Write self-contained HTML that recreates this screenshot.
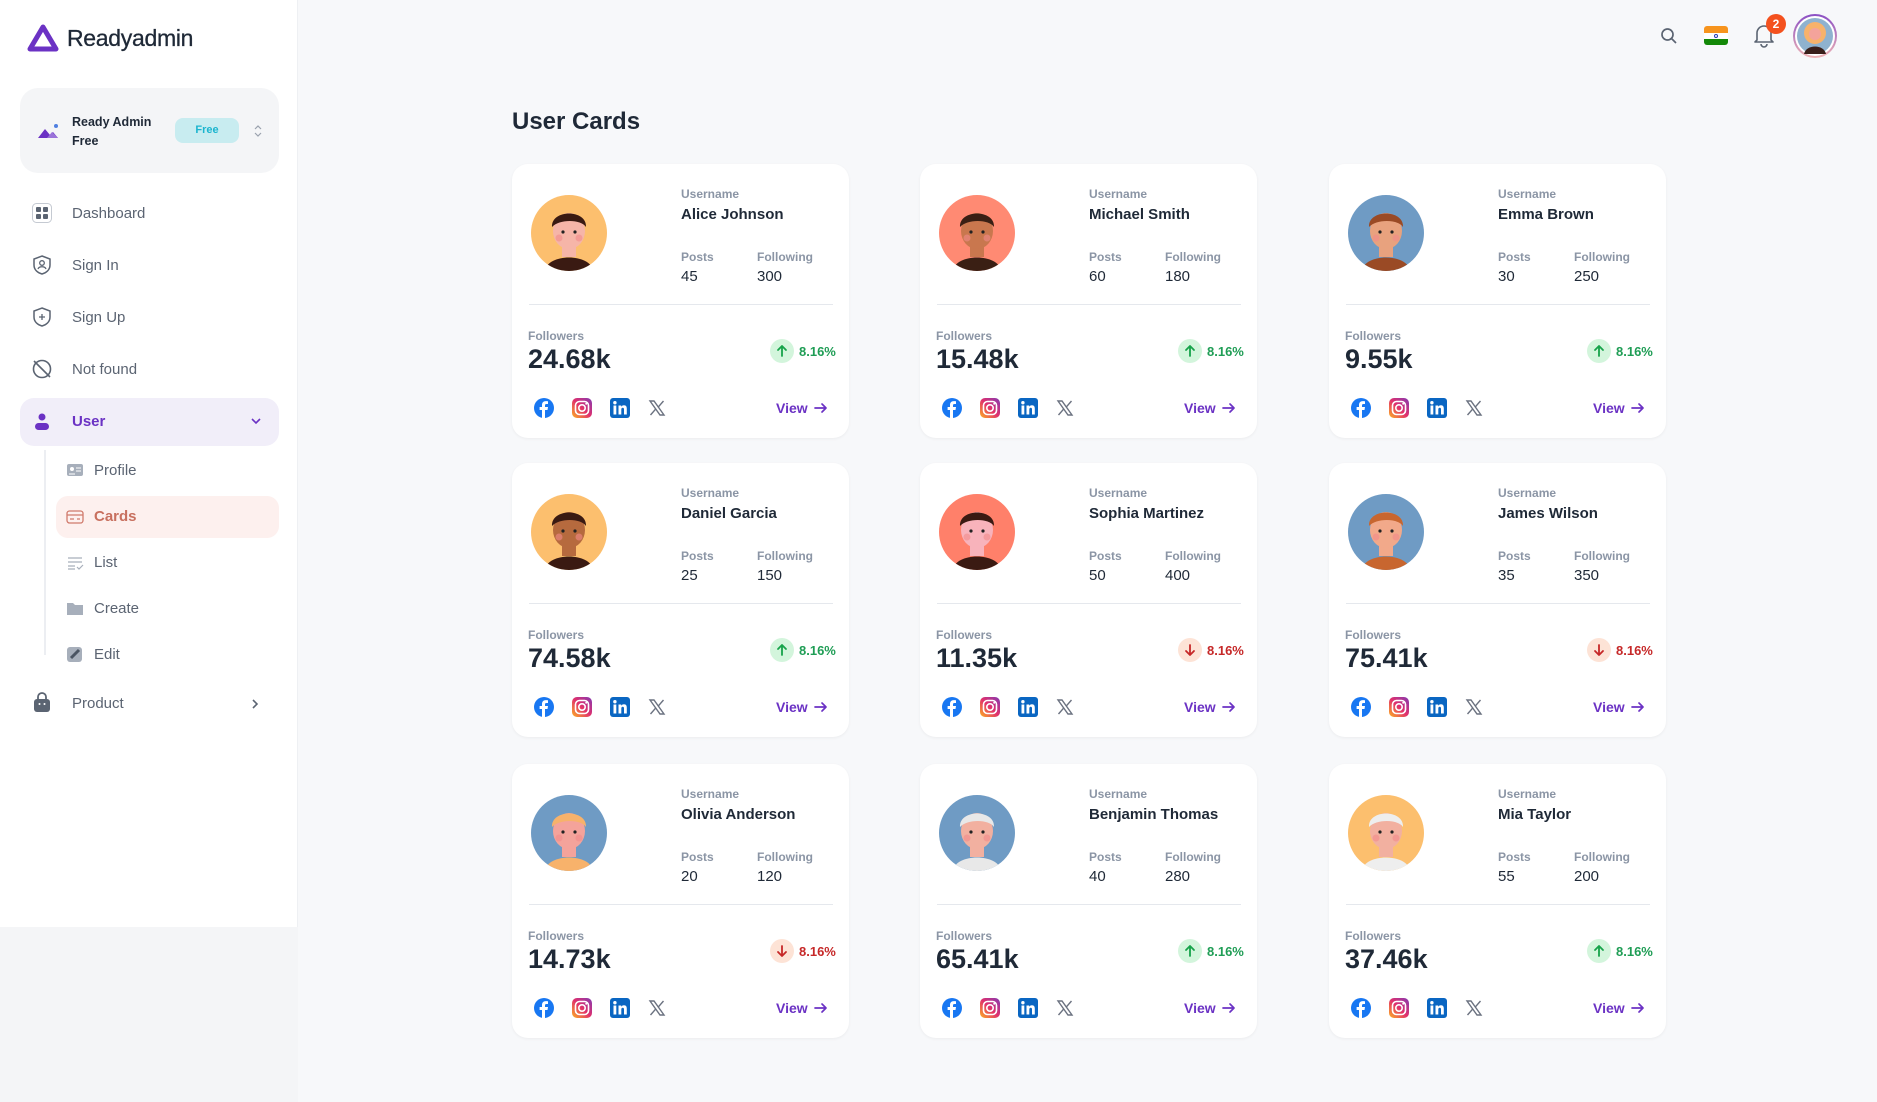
<!DOCTYPE html>
<html><head><meta charset="utf-8"><style>
*{box-sizing:border-box;margin:0;padding:0}
body{width:1877px;height:1102px;background:#f7f8fa;font-family:"Liberation Sans",sans-serif;position:relative;overflow:hidden;color:#1f2937}
.side{position:absolute;left:0;top:0;width:298px;height:927px;background:#fff;border-right:1px solid #eef0f3}
.abs{position:absolute}
.mi{position:absolute;left:72px;font-size:15px;color:#5b6472}
.ic{position:absolute;left:31px;width:22px;height:22px}
.si{position:absolute;left:94px;font-size:15px;color:#5b6472}
.sic{position:absolute;left:66px;width:18px;height:16px}
.card{position:absolute;width:337px;height:274px;background:#fff;border-radius:16px;box-shadow:0 1px 3px rgba(0,0,0,.05)}
.card .t{position:absolute;font-size:12px;color:#8b95a5;font-weight:bold}
.card .v{position:absolute;font-size:15px;color:#1f2937}
.card .nm{position:absolute;left:169px;top:42px;font-size:15px;font-weight:bold;color:#1f2937}
.card .div{position:absolute;left:17px;right:16px;top:140px;height:1px;background:#e5e8ed}
.card .fv{position:absolute;left:16px;top:180px;font-size:27px;font-weight:bold;color:#1f2937}
.badge{position:absolute;left:258px;top:175px;width:24px;height:24px;border-radius:50%}
.pct{position:absolute;left:287px;top:180px;font-size:13px;font-weight:bold}
.soc{position:absolute;top:234px;width:20px;height:20px}
.view{position:absolute;left:264px;top:236px;font-size:14px;font-weight:bold;color:#6b32c4}
.arr{position:absolute;left:302px;top:238px}
.av{position:absolute;left:19px;top:31px;width:76px;height:76px;border-radius:50%;overflow:hidden}
</style></head><body>
<div class="side">
 <svg class="abs" style="left:27px;top:24px" width="32" height="28" viewBox="0 0 32 28"><path d="M16 3 L29 25 L3 25 Z" fill="none" stroke="#6b32c4" stroke-width="5" stroke-linejoin="round"/></svg>
 <div class="abs" style="left:67px;top:25px;font-size:23px;color:#1f2937;letter-spacing:-.3px;-webkit-text-stroke:.3px #1f2937">Readyadmin</div>
 <div class="abs" style="left:20px;top:88px;width:259px;height:85px;background:#f4f5f7;border-radius:18px"></div>
 <svg class="abs" style="left:37px;top:122px" width="22" height="18" viewBox="0 0 22 18"><path d="M1 16 L8 7 L13 13 L16 10 L21 16Z" fill="#6b32c4"/><path d="M10 16 L15 10 L21 16Z" fill="#9a73d9"/><circle cx="19" cy="4" r="2" fill="#4f7fe0"/></svg>
 <div class="abs" style="left:72px;top:113px;font-size:12.5px;font-weight:bold;line-height:19px;color:#1f2937">Ready Admin<br>Free</div>
 <div class="abs" style="left:175px;top:118px;width:64px;height:25px;background:#c8ecf0;border-radius:8px;color:#1cb5cf;font-size:11px;font-weight:bold;text-align:center;line-height:25px">Free</div>
 <svg class="abs" style="left:253px;top:123px" width="10" height="16" viewBox="0 0 10 16"><path d="M2 6 L5 3 L8 6 M2 10 L5 13 L8 10" fill="none" stroke="#9aa2ae" stroke-width="1.2"/></svg>

 <svg class="ic" style="top:202px" viewBox="0 0 22 22"><rect x="1.5" y="1.5" width="19" height="19" rx="4" fill="none" stroke="#c5cad2"/><rect x="5" y="5" width="5" height="5" rx="1" fill="#5b6472"/><rect x="12" y="5" width="5" height="5" rx="1" fill="#5b6472"/><rect x="5" y="12" width="5" height="5" rx="1" fill="#5b6472"/><rect x="12" y="12" width="5" height="5" rx="1" fill="#5b6472"/></svg>
 <div class="mi" style="top:205px">Dashboard</div>
 <svg class="ic" style="top:254px" viewBox="0 0 22 22"><path d="M11 2 L19 5 V11 C19 16 15 19 11 20 C7 19 3 16 3 11 V5Z" fill="none" stroke="#5b6472" stroke-width="1.5"/><circle cx="11" cy="9" r="2.3" fill="none" stroke="#5b6472" stroke-width="1.3"/><path d="M7 15 C8 12 14 12 15 15" fill="none" stroke="#5b6472" stroke-width="1.3"/></svg>
 <div class="mi" style="top:257px">Sign In</div>
 <svg class="ic" style="top:306px" viewBox="0 0 22 22"><path d="M11 2 L19 5 V11 C19 16 15 19 11 20 C7 19 3 16 3 11 V5Z" fill="none" stroke="#5b6472" stroke-width="1.5"/><path d="M11 8 V14 M8 11 H14" stroke="#5b6472" stroke-width="1.3"/></svg>
 <div class="mi" style="top:309px">Sign Up</div>
 <svg class="ic" style="top:358px" viewBox="0 0 22 22"><circle cx="11" cy="11" r="8.5" fill="none" stroke="#5b6472" stroke-width="1.6"/><path d="M3 3 L19 19" stroke="#5b6472" stroke-width="1.6"/></svg>
 <div class="mi" style="top:361px">Not found</div>
 <div class="abs" style="left:20px;top:398px;width:259px;height:48px;background:#f1eef9;border-radius:14px"></div>
 <svg class="ic" style="top:411px" viewBox="0 0 22 22"><circle cx="11" cy="6" r="3.5" fill="#6b32c4"/><rect x="4" y="12" width="14" height="7" rx="3.5" fill="#6b32c4"/></svg>
 <div class="mi" style="top:413px;color:#6b32c4;font-weight:bold">User</div>
 <svg class="abs" style="left:250px;top:416px" width="12" height="10" viewBox="0 0 12 10"><path d="M2 3 L6 7 L10 3" fill="none" stroke="#6b32c4" stroke-width="1.6"/></svg>
 <div class="abs" style="left:44px;top:450px;width:2px;height:205px;background:#eceef2"></div>
 <svg class="sic" style="top:462px" viewBox="0 0 18 16"><rect x="1" y="2" width="16" height="12" rx="2" fill="#a7afbb"/><circle cx="6" cy="7" r="2" fill="#fff"/><path d="M10 6H15M10 9H15M3 12H9" stroke="#fff"/></svg>
 <div class="si" style="top:462px">Profile</div>
 <div class="abs" style="left:56px;top:496px;width:223px;height:42px;background:#fdf0ee;border-radius:12px"></div>
 <svg class="sic" style="top:509px" viewBox="0 0 18 16"><rect x="1" y="2" width="16" height="12" rx="2.5" fill="none" stroke="#d07a6c" stroke-width="1.3"/><path d="M1 6H17M4 10H8M11 10H14" stroke="#d07a6c" stroke-width="1.2"/></svg>
 <div class="si" style="top:508px;color:#c8705f;font-weight:bold">Cards</div>
 <svg class="sic" style="top:555px" viewBox="0 0 18 16"><path d="M2 3H16M2 7H16M2 11H9M2 14H9M11 12L13 14L17 10" fill="none" stroke="#a7afbb" stroke-width="1.2"/></svg>
 <div class="si" style="top:554px">List</div>
 <svg class="sic" style="top:600px" viewBox="0 0 18 16"><path d="M1 3 H7 L9 5 H17 V15 H1Z" fill="#a7afbb"/></svg>
 <div class="si" style="top:600px">Create</div>
 <svg class="sic" style="top:646px" viewBox="0 0 18 16"><rect x="1" y="1" width="15" height="15" rx="3" fill="#a7afbb"/><path d="M5 12 L13 4" stroke="#4b5563" stroke-width="3"/></svg>
 <div class="si" style="top:646px">Edit</div>
 <svg class="ic" style="top:692px" viewBox="0 0 22 22"><rect x="3" y="7" width="16" height="13" rx="3" fill="#5b6472"/><path d="M7 8 V5 a4 4 0 0 1 8 0 V8" fill="none" stroke="#5b6472" stroke-width="1.8"/><circle cx="8.5" cy="12" r="1" fill="#fff"/><circle cx="13.5" cy="12" r="1" fill="#fff"/></svg>
 <div class="mi" style="top:695px">Product</div>
 <svg class="abs" style="left:250px;top:698px" width="10" height="12" viewBox="0 0 10 12"><path d="M3 2 L7 6 L3 10" fill="none" stroke="#5b6472" stroke-width="1.6"/></svg>
</div>
<div class="abs" style="left:0;top:927px;width:298px;height:175px;background:#f4f5f7"></div>

<!-- header -->
<svg class="abs" style="left:1660px;top:27px" width="18" height="18" viewBox="0 0 18 18"><circle cx="7.5" cy="7.5" r="5.5" fill="none" stroke="#5b6472" stroke-width="1.7"/><path d="M11.5 11.5 L16 16" stroke="#5b6472" stroke-width="1.7"/></svg>
<div class="abs" style="left:1704px;top:26px;width:24px;height:19px;border-radius:3px;overflow:hidden"><div style="height:6.5px;background:#f7941d"></div><div style="height:6px;background:#fff;position:relative"><div style="position:absolute;left:10px;top:1px;width:4px;height:4px;border-radius:50%;border:1px solid #2a3ab0"></div></div><div style="height:6.5px;background:#138808"></div></div>
<svg class="abs" style="left:1752px;top:22px" width="24" height="26" viewBox="0 0 24 26"><path d="M5 18 V11 a7 7 0 0 1 14 0 V18 L21 20 H3Z" fill="none" stroke="#5b6472" stroke-width="1.6" stroke-linejoin="round"/><path d="M9 22 a3 3 0 0 0 6 0" fill="none" stroke="#5b6472" stroke-width="1.6"/></svg>
<div class="abs" style="left:1766px;top:14px;width:20px;height:20px;border-radius:50%;background:#f4511e;color:#fff;font-size:12px;text-align:center;line-height:20px;font-weight:bold">2</div>
<div class="abs" style="left:1793px;top:14px;width:44px;height:44px;border-radius:50%;background:linear-gradient(#8a4fc5,#f0b4b4);padding:2px"><div style="width:40px;height:40px;border-radius:50%;background:#fff;padding:2px"><svg width="36" height="36" viewBox="0 0 36 36"><circle cx="18" cy="18" r="18" fill="#8fb2cf"/><circle cx="18" cy="15" r="11" fill="#f7b26b"/><circle cx="18" cy="16" r="6" fill="#f4a39b"/><path d="M7 36 C9 26 27 26 29 36Z" fill="#3a1f1a"/></svg></div></div>

<div class="abs" style="left:512px;top:108px;font-size:24px;font-weight:bold;color:#1f2937">User Cards</div>

<div id="cards"></div>
<script>
const d=[
["Alice Johnson",45,300,"24.68k",1,"#fcbf6e","#3a1a12","#f6b5a8"],
["Michael Smith",60,180,"15.48k",1,"#ff8a73","#3a1f14","#c9774e"],
["Emma Brown",30,250,"9.55k",1,"#6f9bc4","#9a4a25","#e8a27e"],
["Daniel Garcia",25,150,"74.58k",1,"#fcbf6e","#3a1a12","#b66a3e"],
["Sophia Martinez",50,400,"11.35k",0,"#ff806a","#3a1a12","#f8b3bb"],
["James Wilson",35,350,"75.41k",0,"#6f9bc4","#c8662f","#f2a98a"],
["Olivia Anderson",20,120,"14.73k",0,"#6f9bc4","#f7b26b","#f4a39b"],
["Benjamin Thomas",40,280,"65.41k",1,"#6f9bc4","#e8e8e8","#f2b0a0"],
["Mia Taylor",55,200,"37.46k",1,"#fcbf6e","#eeeeee","#f2b0a0"]];
const xs=[512,920,1329],ys=[164,463,764];
const fb='<svg viewBox="0 0 20 20"><circle cx="10" cy="10" r="10" fill="#1877f2"/><path d="M11 20 V12 H13.5 L14 9 H11 V7.3 C11 6.5 11.4 6 12.4 6 H14 V3.3 C13.5 3.2 12.6 3.1 11.7 3.1 C9.4 3.1 8 4.5 8 7 V9 H5.6 V12 H8 V20Z" fill="#fff"/></svg>';
const ig='<svg viewBox="0 0 20 20"><defs><linearGradient id="g" x1="0" y1="1" x2="1" y2="0"><stop offset="0" stop-color="#fdb022"/><stop offset=".5" stop-color="#e1306c"/><stop offset="1" stop-color="#833ab4"/></linearGradient></defs><rect width="20" height="20" rx="5" fill="url(#g)"/><rect x="3.5" y="3.5" width="13" height="13" rx="4" fill="none" stroke="#fff" stroke-width="1.6"/><circle cx="10" cy="10" r="3.2" fill="none" stroke="#fff" stroke-width="1.6"/><circle cx="14.2" cy="5.8" r="1" fill="#fff"/></svg>';
const li='<svg viewBox="0 0 20 20"><rect width="20" height="20" rx="3" fill="#0a66c2"/><rect x="3.5" y="7.5" width="2.8" height="9" fill="#fff"/><circle cx="4.9" cy="4.7" r="1.7" fill="#fff"/><path d="M8.5 7.5 H11.2 V8.8 C11.7 7.9 12.8 7.3 14 7.3 C16.2 7.3 16.8 8.8 16.8 10.8 V16.5 H14 V11.5 C14 10.4 13.7 9.7 12.7 9.7 C11.7 9.7 11.3 10.5 11.3 11.6 V16.5 H8.5Z" fill="#fff"/></svg>';
const xx='<svg viewBox="0 0 20 20"><path d="M3 3 H7 L17 17 H13Z" fill="none" stroke="#6b7280" stroke-width="1.4"/><path d="M16.5 3 L11 9.3 M3.5 17 L9 10.7" stroke="#6b7280" stroke-width="1.4"/></svg>';
let h='';
d.forEach((c,i)=>{const x=xs[i%3],y=ys[Math.floor(i/3)];const up=c[4];
h+=`<div class="card" style="left:${x}px;top:${y}px">
<div class="av"><svg width="76" height="76" viewBox="0 0 76 76"><rect width="76" height="76" fill="${c[5]}"/><path d="M14 76 C16 58 60 58 62 76Z" fill="${c[6]}"/><rect x="31" y="48" width="14" height="14" fill="${c[7]}"/><ellipse cx="38" cy="36" rx="16" ry="18" fill="${c[7]}"/><path d="M21 32 C20 14 56 14 55 32 C50 24 28 24 21 32Z" fill="${c[6]}"/><circle cx="32" cy="37" r="1.6" fill="#222"/><circle cx="44" cy="37" r="1.6" fill="#222"/><circle cx="28" cy="43" r="3.5" fill="#f28b8b" opacity=".6"/><circle cx="48" cy="43" r="3.5" fill="#f28b8b" opacity=".6"/></svg></div>
<div class="t" style="left:169px;top:23px">Username</div>
<div class="nm">${c[0]}</div>
<div class="t" style="left:169px;top:86px">Posts</div>
<div class="t" style="left:245px;top:86px">Following</div>
<div class="v" style="left:169px;top:104px">${c[1]}</div>
<div class="v" style="left:245px;top:104px">${c[2]}</div>
<div class="div"></div>
<div class="t" style="left:16px;top:165px">Followers</div>
<div class="fv">${c[3]}</div>
<div class="badge" style="background:${up?'#d3f5dc':'#fde3d6'}"><svg width="24" height="24" viewBox="0 0 24 24"><path d="${up?'M12 17 V7 M8 11 L12 7 L16 11':'M12 7 V17 M8 13 L12 17 L16 13'}" fill="none" stroke="${up?'#16a34a':'#c62828'}" stroke-width="1.8" stroke-linecap="round" stroke-linejoin="round"/></svg></div>
<div class="pct" style="color:${up?'#1f9d55':'#c62828'}">8.16%</div>
<div class="soc" style="left:22px">${fb}</div><div class="soc" style="left:60px">${ig}</div><div class="soc" style="left:98px">${li}</div><div class="soc" style="left:135px">${xx}</div>
<div class="view">View</div>
<svg class="arr" width="14" height="12" viewBox="0 0 14 12"><path d="M1 6 H12 M8 2 L12 6 L8 10" fill="none" stroke="#6b32c4" stroke-width="1.7" stroke-linecap="round" stroke-linejoin="round"/></svg>
</div>`;});
document.getElementById('cards').innerHTML=h;
</script>
</body></html>
